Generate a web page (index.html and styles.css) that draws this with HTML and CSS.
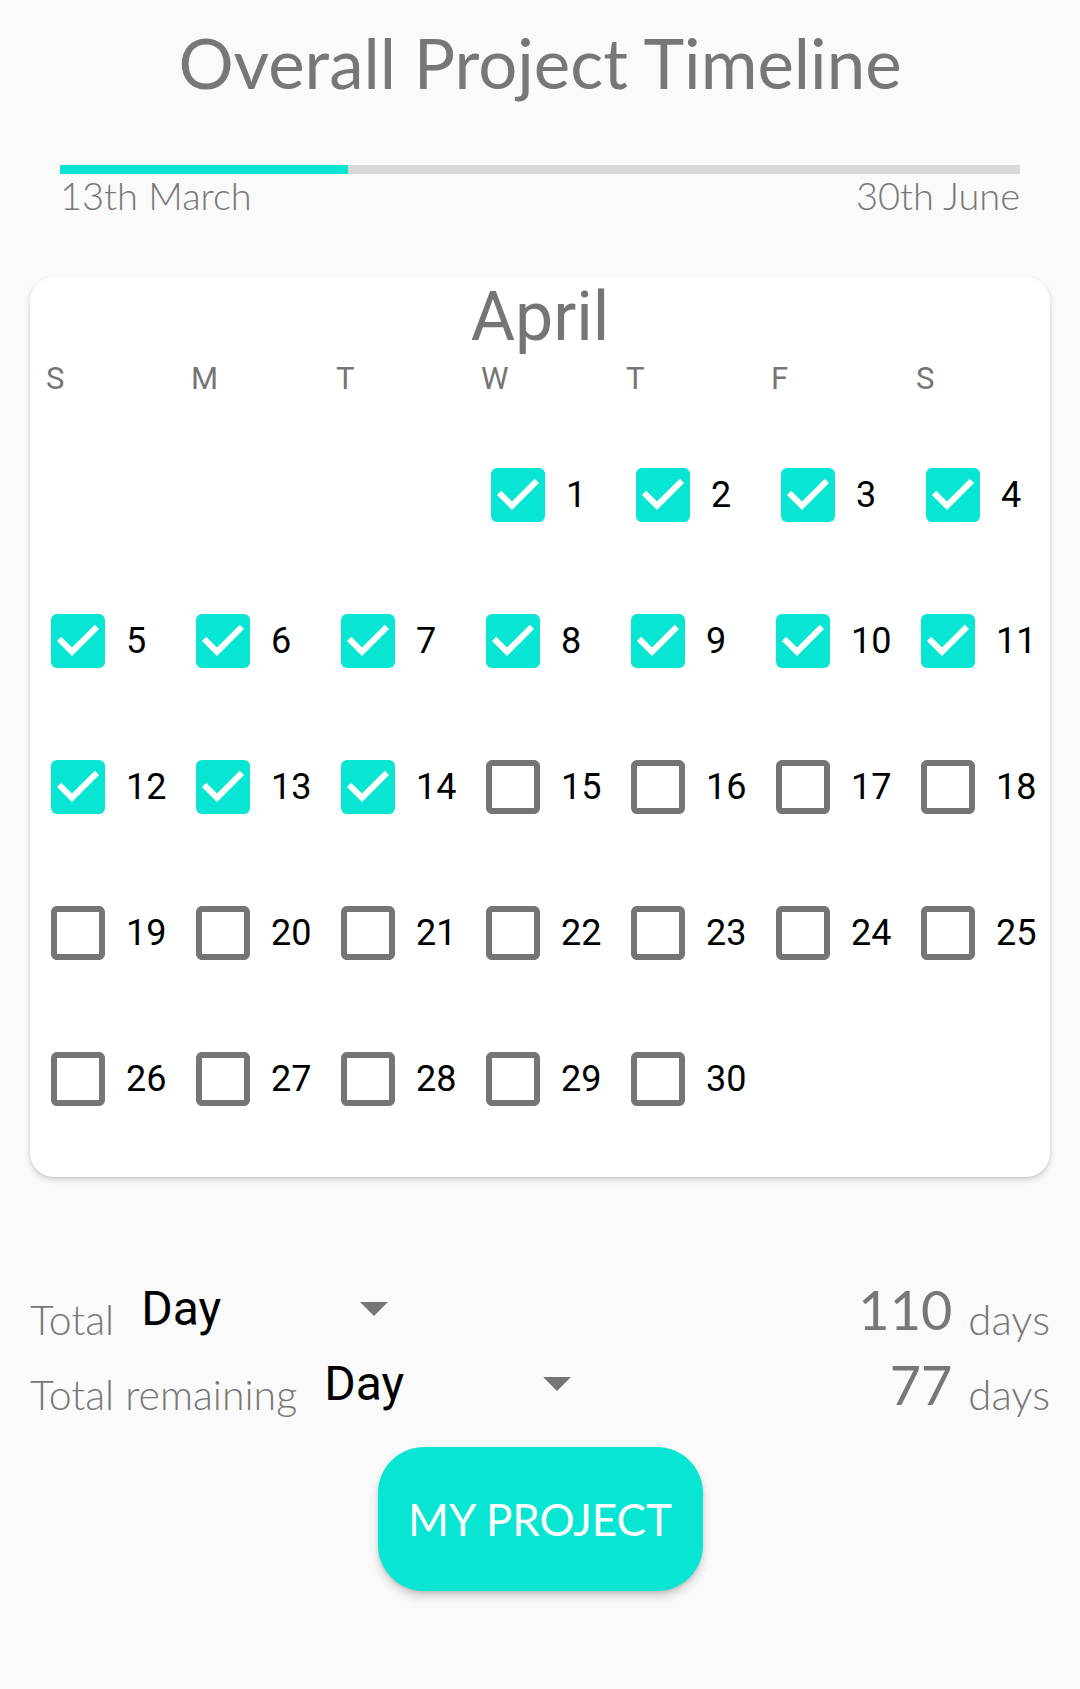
FILE: index.html
```html
<!DOCTYPE html>
<html lang="en">
<head>
<meta charset="utf-8">
<title>Overall Project Timeline</title>
<link rel="stylesheet" href="styles.css">
</head>
<body>
<main class="page">
  <h1 class="title">Overall Project Timeline</h1>

  <section class="timeline">
    <div class="track"><div class="fill" style="width:30%"></div></div>
    <div class="dates"><span>13th March</span><span>30th June</span></div>
  </section>

  <section class="card">
    <h2 class="month">April</h2>
    <div class="cal">
      <div class="dow">S</div><div class="dow">M</div><div class="dow">T</div><div class="dow">W</div><div class="dow">T</div><div class="dow">F</div><div class="dow">S</div>

      <label class="day wk1 start"><svg class="cb" viewBox="3 3 18 18"><rect x="3" y="3" width="18" height="18" rx="2" class="box-on"/><path class="tick" d="M10 17l-5-5 1.41-1.41L10 14.17l7.59-7.59L19 8z"/></svg><span>1</span></label>
      <label class="day wk1"><svg class="cb" viewBox="3 3 18 18"><rect x="3" y="3" width="18" height="18" rx="2" class="box-on"/><path class="tick" d="M10 17l-5-5 1.41-1.41L10 14.17l7.59-7.59L19 8z"/></svg><span>2</span></label>
      <label class="day wk1"><svg class="cb" viewBox="3 3 18 18"><rect x="3" y="3" width="18" height="18" rx="2" class="box-on"/><path class="tick" d="M10 17l-5-5 1.41-1.41L10 14.17l7.59-7.59L19 8z"/></svg><span>3</span></label>
      <label class="day wk1"><svg class="cb" viewBox="3 3 18 18"><rect x="3" y="3" width="18" height="18" rx="2" class="box-on"/><path class="tick" d="M10 17l-5-5 1.41-1.41L10 14.17l7.59-7.59L19 8z"/></svg><span>4</span></label>

      <label class="day"><svg class="cb" viewBox="3 3 18 18"><rect x="3" y="3" width="18" height="18" rx="2" class="box-on"/><path class="tick" d="M10 17l-5-5 1.41-1.41L10 14.17l7.59-7.59L19 8z"/></svg><span>5</span></label>
      <label class="day"><svg class="cb" viewBox="3 3 18 18"><rect x="3" y="3" width="18" height="18" rx="2" class="box-on"/><path class="tick" d="M10 17l-5-5 1.41-1.41L10 14.17l7.59-7.59L19 8z"/></svg><span>6</span></label>
      <label class="day"><svg class="cb" viewBox="3 3 18 18"><rect x="3" y="3" width="18" height="18" rx="2" class="box-on"/><path class="tick" d="M10 17l-5-5 1.41-1.41L10 14.17l7.59-7.59L19 8z"/></svg><span>7</span></label>
      <label class="day"><svg class="cb" viewBox="3 3 18 18"><rect x="3" y="3" width="18" height="18" rx="2" class="box-on"/><path class="tick" d="M10 17l-5-5 1.41-1.41L10 14.17l7.59-7.59L19 8z"/></svg><span>8</span></label>
      <label class="day"><svg class="cb" viewBox="3 3 18 18"><rect x="3" y="3" width="18" height="18" rx="2" class="box-on"/><path class="tick" d="M10 17l-5-5 1.41-1.41L10 14.17l7.59-7.59L19 8z"/></svg><span>9</span></label>
      <label class="day"><svg class="cb" viewBox="3 3 18 18"><rect x="3" y="3" width="18" height="18" rx="2" class="box-on"/><path class="tick" d="M10 17l-5-5 1.41-1.41L10 14.17l7.59-7.59L19 8z"/></svg><span>10</span></label>
      <label class="day"><svg class="cb" viewBox="3 3 18 18"><rect x="3" y="3" width="18" height="18" rx="2" class="box-on"/><path class="tick" d="M10 17l-5-5 1.41-1.41L10 14.17l7.59-7.59L19 8z"/></svg><span>11</span></label>

      <label class="day"><svg class="cb" viewBox="3 3 18 18"><rect x="3" y="3" width="18" height="18" rx="2" class="box-on"/><path class="tick" d="M10 17l-5-5 1.41-1.41L10 14.17l7.59-7.59L19 8z"/></svg><span>12</span></label>
      <label class="day"><svg class="cb" viewBox="3 3 18 18"><rect x="3" y="3" width="18" height="18" rx="2" class="box-on"/><path class="tick" d="M10 17l-5-5 1.41-1.41L10 14.17l7.59-7.59L19 8z"/></svg><span>13</span></label>
      <label class="day"><svg class="cb" viewBox="3 3 18 18"><rect x="3" y="3" width="18" height="18" rx="2" class="box-on"/><path class="tick" d="M10 17l-5-5 1.41-1.41L10 14.17l7.59-7.59L19 8z"/></svg><span>14</span></label>
      <label class="day"><svg class="cb" viewBox="3 3 18 18"><path class="box-off" d="M19 5v14H5V5h14m0-2H5c-1.1 0-2 .9-2 2v14c0 1.1.9 2 2 2h14c1.1 0 2-.9 2-2V5c0-1.1-.9-2-2-2z"/></svg><span>15</span></label>
      <label class="day"><svg class="cb" viewBox="3 3 18 18"><path class="box-off" d="M19 5v14H5V5h14m0-2H5c-1.1 0-2 .9-2 2v14c0 1.1.9 2 2 2h14c1.1 0 2-.9 2-2V5c0-1.1-.9-2-2-2z"/></svg><span>16</span></label>
      <label class="day"><svg class="cb" viewBox="3 3 18 18"><path class="box-off" d="M19 5v14H5V5h14m0-2H5c-1.1 0-2 .9-2 2v14c0 1.1.9 2 2 2h14c1.1 0 2-.9 2-2V5c0-1.1-.9-2-2-2z"/></svg><span>17</span></label>
      <label class="day"><svg class="cb" viewBox="3 3 18 18"><path class="box-off" d="M19 5v14H5V5h14m0-2H5c-1.1 0-2 .9-2 2v14c0 1.1.9 2 2 2h14c1.1 0 2-.9 2-2V5c0-1.1-.9-2-2-2z"/></svg><span>18</span></label>

      <label class="day"><svg class="cb" viewBox="3 3 18 18"><path class="box-off" d="M19 5v14H5V5h14m0-2H5c-1.1 0-2 .9-2 2v14c0 1.1.9 2 2 2h14c1.1 0 2-.9 2-2V5c0-1.1-.9-2-2-2z"/></svg><span>19</span></label>
      <label class="day"><svg class="cb" viewBox="3 3 18 18"><path class="box-off" d="M19 5v14H5V5h14m0-2H5c-1.1 0-2 .9-2 2v14c0 1.1.9 2 2 2h14c1.1 0 2-.9 2-2V5c0-1.1-.9-2-2-2z"/></svg><span>20</span></label>
      <label class="day"><svg class="cb" viewBox="3 3 18 18"><path class="box-off" d="M19 5v14H5V5h14m0-2H5c-1.1 0-2 .9-2 2v14c0 1.1.9 2 2 2h14c1.1 0 2-.9 2-2V5c0-1.1-.9-2-2-2z"/></svg><span>21</span></label>
      <label class="day"><svg class="cb" viewBox="3 3 18 18"><path class="box-off" d="M19 5v14H5V5h14m0-2H5c-1.1 0-2 .9-2 2v14c0 1.1.9 2 2 2h14c1.1 0 2-.9 2-2V5c0-1.1-.9-2-2-2z"/></svg><span>22</span></label>
      <label class="day"><svg class="cb" viewBox="3 3 18 18"><path class="box-off" d="M19 5v14H5V5h14m0-2H5c-1.1 0-2 .9-2 2v14c0 1.1.9 2 2 2h14c1.1 0 2-.9 2-2V5c0-1.1-.9-2-2-2z"/></svg><span>23</span></label>
      <label class="day"><svg class="cb" viewBox="3 3 18 18"><path class="box-off" d="M19 5v14H5V5h14m0-2H5c-1.1 0-2 .9-2 2v14c0 1.1.9 2 2 2h14c1.1 0 2-.9 2-2V5c0-1.1-.9-2-2-2z"/></svg><span>24</span></label>
      <label class="day"><svg class="cb" viewBox="3 3 18 18"><path class="box-off" d="M19 5v14H5V5h14m0-2H5c-1.1 0-2 .9-2 2v14c0 1.1.9 2 2 2h14c1.1 0 2-.9 2-2V5c0-1.1-.9-2-2-2z"/></svg><span>25</span></label>

      <label class="day"><svg class="cb" viewBox="3 3 18 18"><path class="box-off" d="M19 5v14H5V5h14m0-2H5c-1.1 0-2 .9-2 2v14c0 1.1.9 2 2 2h14c1.1 0 2-.9 2-2V5c0-1.1-.9-2-2-2z"/></svg><span>26</span></label>
      <label class="day"><svg class="cb" viewBox="3 3 18 18"><path class="box-off" d="M19 5v14H5V5h14m0-2H5c-1.1 0-2 .9-2 2v14c0 1.1.9 2 2 2h14c1.1 0 2-.9 2-2V5c0-1.1-.9-2-2-2z"/></svg><span>27</span></label>
      <label class="day"><svg class="cb" viewBox="3 3 18 18"><path class="box-off" d="M19 5v14H5V5h14m0-2H5c-1.1 0-2 .9-2 2v14c0 1.1.9 2 2 2h14c1.1 0 2-.9 2-2V5c0-1.1-.9-2-2-2z"/></svg><span>28</span></label>
      <label class="day"><svg class="cb" viewBox="3 3 18 18"><path class="box-off" d="M19 5v14H5V5h14m0-2H5c-1.1 0-2 .9-2 2v14c0 1.1.9 2 2 2h14c1.1 0 2-.9 2-2V5c0-1.1-.9-2-2-2z"/></svg><span>29</span></label>
      <label class="day"><svg class="cb" viewBox="3 3 18 18"><path class="box-off" d="M19 5v14H5V5h14m0-2H5c-1.1 0-2 .9-2 2v14c0 1.1.9 2 2 2h14c1.1 0 2-.9 2-2V5c0-1.1-.9-2-2-2z"/></svg><span>30</span></label>
    </div>
  </section>

  <section class="stats">
    <div class="stat-row">
      <div class="stat-left">
        <span class="stat-label">Total</span>
        <span class="spinner"><span class="spinner-text">Day</span><span class="caret"></span></span>
      </div>
      <div class="stat-right"><span class="num big">110</span><span class="unit">days</span></div>
    </div>
    <div class="stat-row">
      <div class="stat-left">
        <span class="stat-label">Total remaining</span>
        <span class="spinner"><span class="spinner-text">Day</span><span class="caret"></span></span>
      </div>
      <div class="stat-right"><span class="num big">77</span><span class="unit">days</span></div>
    </div>
  </section>

  <div class="actions">
    <button class="btn" type="button">MY PROJECT</button>
  </div>
</main>
</body>
</html>
```

FILE: styles.css
```css
* { box-sizing: border-box; }

html, body {
  margin: 0;
  padding: 0;
  background: #fafafa;
}

body {
  font-family: "Lato", "Liberation Sans", sans-serif;
  color: #757575;
}

.page {
  width: 1080px;
  min-height: 1689px;
}

.title {
  margin: 0;
  padding-top: 28px;
  font-size: 69px;
  line-height: 69px;
  font-weight: 400;
  text-align: center;
  color: #777777;
}

.timeline {
  margin: 68px 60px 0;
}

.track {
  height: 9px;
  background: #d9d9d9;
}

.fill {
  height: 100%;
  background: #08e6d3;
}

.dates {
  margin-top: 2px;
  display: flex;
  justify-content: space-between;
  font-size: 38px;
  line-height: 38px;
  font-weight: 300;
  color: #777777;
}

.card {
  margin: 63px 30px 0;
  height: 900px;
  padding: 6px 0 0 16px;
  background: #ffffff;
  border-radius: 24px;
  box-shadow: 0 3px 6px rgba(0, 0, 0, 0.16), 0 1px 2px rgba(0, 0, 0, 0.08);
}

.month {
  margin: 0;
  font-family: "Roboto", sans-serif;
  font-weight: 400;
  font-size: 68px;
  line-height: 68px;
  text-align: center;
  color: #757575;
  padding-right: 16px;
}

.cal {
  margin-top: 12px;
  display: grid;
  grid-template-columns: repeat(6, 145px) minmax(0, 1fr);
  grid-template-rows: 59px;
  grid-auto-rows: 146px;
}

.dow {
  align-self: start;
  font-family: "Roboto", sans-serif;
  font-size: 31px;
  line-height: 31px;
  color: #757575;
}

.day {
  display: flex;
  align-items: center;
  gap: 21px;
  padding-left: 5px;
  font-family: "Roboto", sans-serif;
  font-size: 36px;
  color: #000000;
}

.wk1 { padding-left: 10px; }
.start { grid-column: 4; }

.cb {
  width: 54px;
  height: 54px;
  flex: none;
  display: block;
}

.box-on { fill: #08e6d3; }
.tick { fill: #ffffff; }
.box-off { fill: #757575; }

.stats {
  margin: 0 30px;
  padding-top: 100px;
}

.stat-row {
  display: flex;
  justify-content: space-between;
  align-items: baseline;
  height: 75px;
}

.stat-label {
  font-size: 41px;
  font-weight: 300;
  color: #777777;
}

.spinner {
  display: inline-flex;
  align-items: center;
  width: 252px;
  margin-left: 19px;
  vertical-align: 10px;
}

.spinner-text {
  font-family: "Roboto", sans-serif;
  font-size: 48px;
  color: #000000;
  width: 223px;
  padding-left: 4px;
}

.caret {
  width: 0;
  height: 0;
  border-left: 14px solid transparent;
  border-right: 14px solid transparent;
  border-top: 14px solid #757575;
}

.num {
  font-size: 54px;
  font-weight: 400;
  color: #777777;
  vertical-align: 5px;
}

.unit {
  margin-left: 16px;
  font-size: 42px;
  font-weight: 300;
  color: #777777;
}

.actions {
  display: flex;
  justify-content: center;
  margin-top: 20px;
}

.btn {
  width: 325px;
  height: 144px;
  border: none;
  border-radius: 46px;
  background: #08e6d3;
  color: #ffffff;
  font-family: "Lato", sans-serif;
  font-size: 44px;
  font-weight: 400;
  box-shadow: 0 6px 10px rgba(0, 0, 0, 0.16), 0 2px 3px rgba(0, 0, 0, 0.1);
  padding: 0;
}
```
